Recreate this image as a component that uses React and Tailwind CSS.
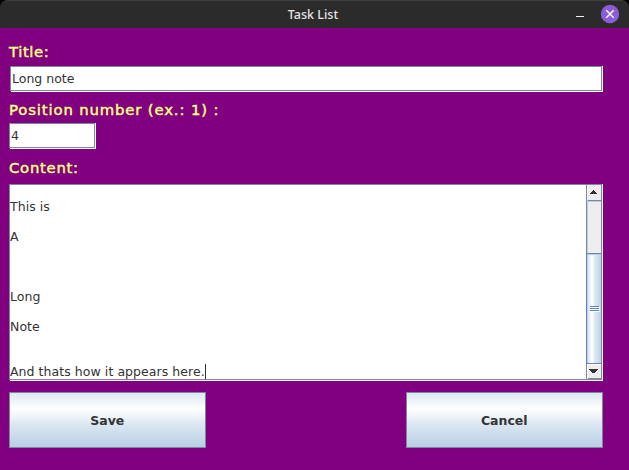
const fieldBox =
  'border border-[#7a8a99] bg-white shadow-[1px_1px_0_#ffffff,1px_0_0_#ffffff] flex items-center text-[#333333] text-[12.5px] leading-[15px] whitespace-pre';

const noteLines = ['', 'This is', '', 'A', '', '', '', 'Long', '', 'Note', '', '', 'And thats how it appears here.'];

function Label({ children, tracking }) {
  return (
    <div className={`h-[20px] text-[14.8px] leading-[20px] text-[#ffff80] [-webkit-text-stroke:0.45px_#ffff80] whitespace-pre ${tracking}`}>
      {children}
    </div>
  );
}

function TitleBar() {
  return (
    <div className="bg-black">
      <div className="relative h-[28px] flex items-center justify-center rounded-t-[8px] bg-[#2b2b2b] border-t border-[#404040]">
        <span className="font-['Noto_Sans',sans-serif] font-medium text-[12.5px] leading-[16px] text-[#e4e4e4] pr-[3px]">Task List</span>
        <svg className="absolute right-0 top-[-1px]" width="69" height="28" viewBox="560 0 69 28">
          <path d="M576 16.5h8" stroke="#eeeeee" />
          <circle cx="610" cy="14" r="9.2" fill="#8c5bd8" />
          <path d="M606.3 10.3l7.4 7.4M613.7 10.3l-7.4 7.4" stroke="#ffffff" strokeWidth="1.5" />
        </svg>
      </div>
    </div>
  );
}

function ScrollBar() {
  return (
    <div className="w-[15px] h-full shrink-0 flex flex-col border-l border-[#7a8a99] bg-[#eeeeee]">
      <div className="h-[16px] border-b border-[#7a8a99] border-l border-l-white">
        <svg width="13" height="15" viewBox="588 185 13 15" shapeRendering="crispEdges">
          <path d="M593 190h1v1h1v1h1v1h1v1h-7v-1h1v-1h1v-1h1z" fill="#333333" />
        </svg>
      </div>
      <div className="h-[52px] border-l border-t border-[#b8cfe5]" />
      <div className="h-[111px] -ml-px border border-r-0 border-[#6382bf] bg-[linear-gradient(to_right,#c8d9e9_0px,#e2ecf5_2px,#ffffff_5px,#dce8f2_8px,#b8cfe5_15px)] shadow-[inset_1px_1px_0_#b8cfe5] flex items-center pl-[3px]">
        <svg width="10" height="6" shapeRendering="crispEdges">
          <path d="M1 1h9v1H1zM1 3h9v1H1zM1 5h9v1H1z" fill="#ffffff" />
          <path d="M0 0h9v1H0zM0 2h9v1H0zM0 4h9v1H0z" fill="#6382bf" />
        </svg>
      </div>
      <div className="h-[15px] border-l border-t border-white">
        <svg width="13" height="14" viewBox="588 365 13 14" shapeRendering="crispEdges">
          <path d="M589 369h9v1h-1v1h-1v1h-1v1h-3v-1h-1v-1h-1v-1h-1z" fill="#333333" />
          <path d="M588 378h14v1h-14z" fill="#7a8a99" />
        </svg>
      </div>
    </div>
  );
}

function MetalButton({ children }) {
  return (
    <button className="w-[197px] h-[56px] pr-[0.5px] border border-[#7a8a99] bg-[linear-gradient(to_bottom,#dde8f3_0%,#ffffff_30%,#dce7f2_58%,#b8cfe5_100%)] text-[#333333] text-[12.5px] font-bold leading-[15px]">
      {children}
    </button>
  );
}

export default function App() {
  return (
    <div className="w-[629px] h-[470px] overflow-hidden bg-[#800080] font-['DejaVu_Sans',sans-serif]">
      <TitleBar />
      <div className="pl-[9px] pt-[14px]">
        <Label tracking="tracking-[0.6px]">Title:</Label>
        <div className={`${fieldBox} ml-px mt-[4px] w-[592px] h-[25px] pl-px`}>Long note</div>
        <div className="h-[9px]" />
        <Label tracking="tracking-[0.88px]">Position number (ex.: 1) :</Label>
        <div className={`${fieldBox} mt-[3px] w-[86px] h-[25px] pl-px`}>4</div>
        <div className="h-[10px]" />
        <Label tracking="tracking-[0.75px]">Content:</Label>
        <div className="mt-[6px] w-[593px] h-[196px] border border-[#7a8a99] bg-white shadow-[1px_1px_0_#ffffff,1px_0_0_#ffffff] flex">
          <div className="flex-1 h-full overflow-hidden pt-px text-[12.5px] tracking-[0.06px] text-[#333333] whitespace-pre">
            <div className="-mt-[2px]">
              {noteLines.map((line, i) => (
                <div key={i} className="h-[15px] leading-[15px] flex">
                  {line}
                  {i === noteLines.length - 1 && <span className="w-px h-[15px] bg-[#333333]" />}
                </div>
              ))}
            </div>
          </div>
          <ScrollBar />
        </div>
        <div className="mt-[12px] w-[594px] flex justify-between">
          <MetalButton>Save</MetalButton>
          <MetalButton>Cancel</MetalButton>
        </div>
      </div>
    </div>
  );
}
